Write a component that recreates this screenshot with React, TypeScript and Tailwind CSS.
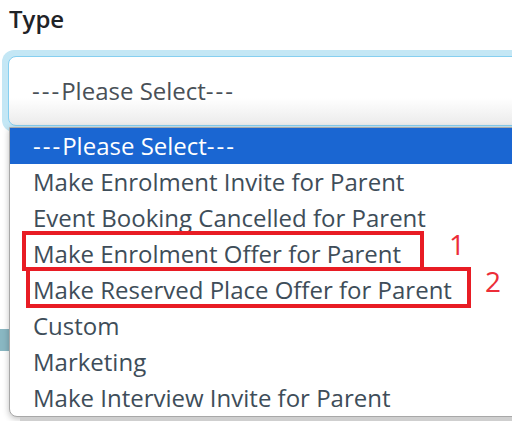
const options = [
  '---Please Select---',
  'Make Enrolment Invite for Parent',
  'Event Booking Cancelled for Parent',
  'Make Enrolment Offer for Parent',
  'Make Reserved Place Offer for Parent',
  'Custom',
  'Marketing',
  'Make Interview Invite for Parent',
];

// Segoe-style hyphens are wider than Open Sans ones
function Label({ text }: { text: string }) {
  const m = text.match(/^(-+)(.*?)(-+)$/);
  if (!m) return <>{text}</>;
  return (
    <>
      <span className="tracking-[2px]">{m[1]}</span>
      {m[2]}
      <span className="tracking-[2px]">{m[3]}</span>
    </>
  );
}

export default function App() {
  return (
    <div className="relative h-[421px] w-[512px] overflow-hidden bg-white font-['Open_Sans',sans-serif]">
      {/* label */}
      <div className="pl-[9px] pt-[3px] text-[24px] font-semibold leading-[32px] text-[#1f2327]">Type</div>

      {/* focused select */}
      <div className="mt-[15px] ml-[2px] -mr-[20px] rounded-[12px] bg-[#c4e7f5] p-[6px]">
        <div className="flex h-[70px] items-center rounded-[8px] border border-[#86cff0] bg-gradient-to-b from-white from-60% to-[#ebebeb] pl-[23px] text-[24px] text-[#495057]">
          <Label text="---Please Select---" />
        </div>
      </div>

      {/* something behind the list */}
      <div className="absolute left-0 top-[329px] h-[22px] w-[9px] bg-[#3a8799] opacity-60" />

      {/* open dropdown list */}
      <div className="absolute left-[9px] top-[127px] -right-[20px] overflow-hidden rounded-bl-[8px] border border-[#a8a8a8] bg-white shadow-[0_2px_6px_rgba(0,0,0,0.25)]">
        {options.map((o, i) => (
          <div
            key={o}
            className={`flex h-[36px] items-center pl-[23px] text-[24px] leading-none ${
              i === 0 ? 'bg-[#1a66d2] text-white' : 'text-[#3e4d59]'
            }`}
          >
            <Label text={o} />
          </div>
        ))}
      </div>
      <div className="absolute bottom-0 left-[20px] right-0 h-[4px] bg-[#cfcfcf]" />

      {/* annotations */}
      <div className="absolute left-[22px] top-[231px] h-[40px] w-[402px] border-[4px] border-[#e81c24]" />
      <div className="absolute left-[26px] top-[267px] h-[41px] w-[445px] border-[4px] border-[#e81c24]" />
      <div className="absolute left-[449px] top-[226px] text-[28px] leading-[36px] text-[#ec2d38]">1</div>
      <div className="absolute left-[485px] top-[263px] text-[28px] leading-[36px] text-[#ec2d38]">2</div>
    </div>
  );
}
